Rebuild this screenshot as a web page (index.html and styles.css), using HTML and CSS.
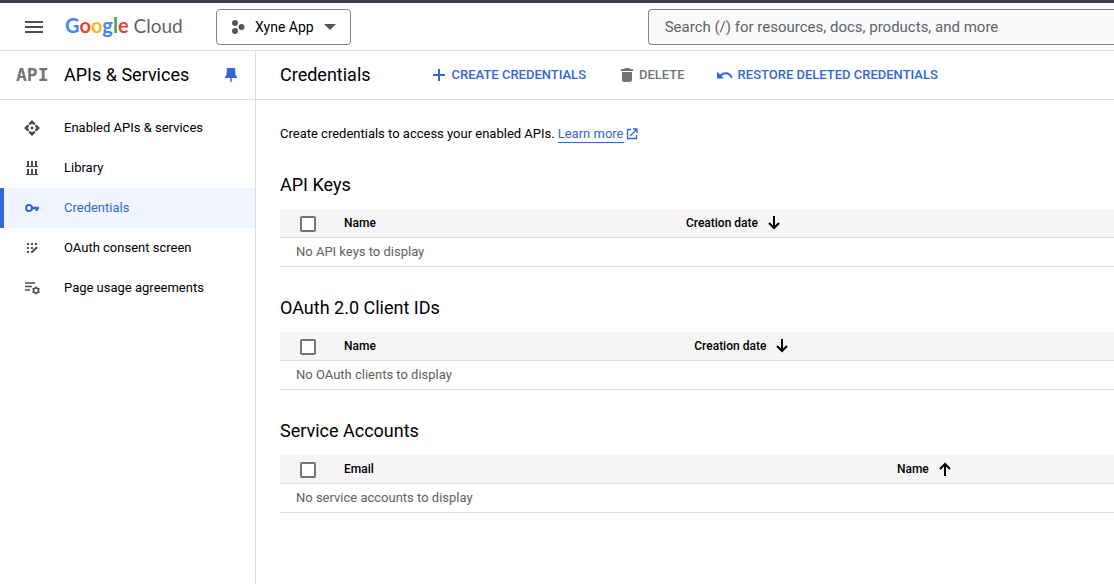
FILE: index.html
```html
<!DOCTYPE html>
<html lang="en">
<head>
<meta charset="utf-8">
<meta name="viewport" content="width=device-width, initial-scale=1">
<title>Credentials – APIs &amp; Services</title>
<link rel="stylesheet" href="styles.css">
</head>
<body>
<header class="topbar">
  <button class="menu-button" type="button" aria-label="Main menu">
    <svg width="18" height="12" viewBox="0 0 18 12" fill="currentColor"><path d="M0 0h18v2H0zM0 5h18v2H0zM0 10h18v2H0z"/></svg>
  </button>
  <a class="brand" href="#" aria-label="Google Cloud"><span class="brand-google"><span class="blue">G</span><span class="red">o</span><span class="yellow">o</span><span class="blue">g</span><span class="green">l</span><span class="red">e</span></span><span class="brand-cloud">Cloud</span></a>
  <button class="project-picker" type="button">
    <svg width="14" height="14" viewBox="0 0 14 14" fill="currentColor"><circle cx="4" cy="3" r="3"/><circle cx="10.500" cy="7" r="3"/><circle cx="4" cy="11" r="3"/></svg>
    <span>Xyne App</span>
    <svg class="caret" width="12" height="6" viewBox="0 0 12 6" fill="currentColor"><path d="M0 0h12L6 6z"/></svg>
  </button>
  <input class="search" type="search" aria-label="Search" placeholder="Search (/) for resources, docs, products, and more">
</header>

<div class="layout">
  <aside class="sidebar">
    <div class="product">
      <span class="product-icon" aria-hidden="true">API</span>
      <h2 class="product-title">APIs &amp; Services</h2>
      <button class="pin" type="button" aria-label="Pin product">
        <svg width="12" height="16" viewBox="0 0 12 16" fill="currentColor"><path d="M2.500 1h7q.5 0 .6.500L10.500 8l1.500 2v1H6.700v4h-1.400v-4H0v-1l1.500-2 .4-6.500Q2 1 2.500 1z"/></svg>
      </button>
    </div>
    <nav class="nav" aria-label="APIs and services">
      <a class="nav-item" href="#">
        <svg width="16" height="16" viewBox="0 0 16 16" fill="currentColor"><path d="M8 0l3.500 3.500-1.500 1.800L8 3.800 6 5.300 4.500 3.500zM16 8l-3.500 3.500-1.800-1.500L12.200 8l-1.500-2 1.800-1.500zM8 16l-3.500-3.500L6 10.700l2 1.500 2-1.500 1.500 1.800zM0 8l3.500-3.500L5.300 6 3.800 8l1.500 2-1.800 1.500z"/><circle cx="8" cy="8" r="1.400"/></svg>
        <span>Enabled APIs &amp; services</span>
      </a>
      <a class="nav-item" href="#">
        <svg width="16" height="16" viewBox="0 0 16 16" fill="currentColor"><path d="M2 6h12v1H2zM3 1h2v5H3zM7 1h2v5H7zM11 1h2v5h-2zM2 14h12v1H2zM3 9h2v5H3zM7 9h2v5H7zM11 9h2v5h-2z"/></svg>
        <span>Library</span>
      </a>
      <a class="nav-item selected" href="#" aria-current="page">
        <svg width="16" height="16" viewBox="0 0 16 16" fill="none" stroke="currentColor"><circle cx="5" cy="8" r="3" stroke-width="2"/><path d="M8 8h7M12.700 8v3" stroke-width="2.400"/></svg>
        <span>Credentials</span>
      </a>
      <a class="nav-item" href="#">
        <svg width="16" height="16" viewBox="0 0 16 16" fill="currentColor"><path d="M3 3h2v2H3zM7 3h2v2H7zM11 3h2v2h-2zM3 7h2v2H3zM7 7h2v2H7zM3 11h2v2H3z"/><path d="M7 13v-1.500L12.300 6.500l1.500 1.300L8.500 13z"/></svg>
        <span>OAuth consent screen</span>
      </a>
      <a class="nav-item" href="#">
        <svg width="16" height="16" viewBox="0 0 16 16" fill="none" stroke="currentColor" stroke-width="1.500"><path d="M1 3h10M1 6.500h7M1 10h5"/><circle cx="12" cy="10.500" r="2.500"/><path d="M12 6.500V8M12 13v1.500M8.500 8.500l1.300.8M14.200 11.700l1.300.8M8.500 12.500l1.300-.8M14.200 9.300l1.300-.8"/></svg>
        <span>Page usage agreements</span>
      </a>
    </nav>
  </aside>

  <main class="main">
    <div class="toolbar">
      <h1 class="page-title">Credentials</h1>
      <button class="action create" type="button">
        <svg width="14" height="14" viewBox="0 0 14 14" fill="currentColor"><path d="M6 1h2v5h5v2H8v5H6V8H1V6h5z"/></svg>
        <span>CREATE CREDENTIALS</span>
      </button>
      <button class="action delete" type="button" disabled>
        <svg width="14" height="16" viewBox="0 0 14 16" fill="currentColor"><path d="M4.500 1h5v1H13v2H1V2h3.500zM2 5h10v8q0 2-2 2H4q-2 0-2-2z"/></svg>
        <span>DELETE</span>
      </button>
      <button class="action restore" type="button">
        <svg width="16" height="14" viewBox="0 0 16 14" fill="currentColor"><path d="M0 3.500v7h7L4.400 7.900Q6.200 6.200 8.500 6.200q4 0 5.400 4.100l1.900-.6Q13.900 4.200 8.500 4.200 5.400 4.200 3 6.500z"/></svg>
        <span>RESTORE DELETED CREDENTIALS</span>
      </button>
    </div>

    <div class="content">
      <p class="intro">Create credentials to access your enabled APIs. <a class="learn-more" href="#">Learn more</a><svg class="external" width="12" height="12" viewBox="0 0 12 12" fill="none" stroke="currentColor" stroke-width="1.300"><path d="M5 1.500H1.500v9h9V7M7 1h4v4M11 1L4 8"/></svg></p>

      <section class="section">
        <h2 class="section-title">API Keys</h2>
        <table class="table">
          <colgroup><col class="col-check"><col class="col-key"><col></colgroup>
          <thead><tr>
            <th><input class="check" type="checkbox" aria-label="Select all API keys"></th>
            <th scope="col">Name</th>
            <th scope="col" aria-sort="descending"><button class="sort" type="button">Creation date<svg width="12" height="14" viewBox="0 0 12 14" fill="none" stroke="currentColor" stroke-width="2"><path d="M6 0v12M1 7l5 5 5-5"/></svg></button></th>
          </tr></thead>
          <tbody><tr><td colspan="3">No API keys to display</td></tr></tbody>
        </table>
      </section>

      <section class="section">
        <h2 class="section-title">OAuth 2.0 Client IDs</h2>
        <table class="table">
          <colgroup><col class="col-check"><col class="col-client"><col></colgroup>
          <thead><tr>
            <th><input class="check" type="checkbox" aria-label="Select all OAuth clients"></th>
            <th scope="col">Name</th>
            <th scope="col" aria-sort="descending"><button class="sort" type="button">Creation date<svg width="12" height="14" viewBox="0 0 12 14" fill="none" stroke="currentColor" stroke-width="2"><path d="M6 0v12M1 7l5 5 5-5"/></svg></button></th>
          </tr></thead>
          <tbody><tr><td colspan="3">No OAuth clients to display</td></tr></tbody>
        </table>
      </section>

      <section class="section">
        <h2 class="section-title">Service Accounts</h2>
        <table class="table">
          <colgroup><col class="col-check"><col class="col-email"><col></colgroup>
          <thead><tr>
            <th><input class="check" type="checkbox" aria-label="Select all service accounts"></th>
            <th scope="col">Email</th>
            <th scope="col" aria-sort="ascending"><button class="sort" type="button">Name<svg width="12" height="14" viewBox="0 0 12 14" fill="none" stroke="currentColor" stroke-width="2"><path d="M6 14V2M1 7l5-5 5 5"/></svg></button></th>
          </tr></thead>
          <tbody><tr><td colspan="3">No service accounts to display</td></tr></tbody>
        </table>
      </section>
    </div>
  </main>
</div>
</body>
</html>
```
FILE: styles.css
```css
* { box-sizing: border-box; }

body {
  margin: 0;
  min-height: 100vh;
  display: flex;
  flex-direction: column;
  border-top: 3px solid #41384a;
  background: #fff;
  color: #000;
  font: 13px/20px Roboto, "Liberation Sans", sans-serif;
}

h1, h2, p { margin: 0; }
svg { display: block; flex: none; }
a { color: inherit; text-decoration: none; }

button {
  display: flex;
  align-items: center;
  padding: 0;
  border: 0;
  background: none;
  color: inherit;
  font: inherit;
  white-space: nowrap;
}

.topbar {
  display: flex;
  align-items: center;
  height: 48px;
  padding-left: 25px;
  border-bottom: 1px solid #dadce0;
}

.menu-button { color: #4d4d4d; }

.brand {
  display: flex;
  align-items: baseline;
  gap: 5px;
  width: 117px;
  margin: 0 34px 0 22px;
  padding-bottom: 2px;
  font: 20px/24px Lato, sans-serif;
  white-space: nowrap;
}
.brand-google { font-weight: 700; }
.brand-cloud { color: #5f6368; font-size: 19px; }
.blue { color: #4285f4; }
.red { color: #ea4335; }
.yellow { color: #fbbc04; }
.green { color: #34a853; }

.project-picker {
  flex: none;
  height: 36px;
  padding: 0 14px;
  border: 1px solid #80868b;
  border-radius: 4px;
  font-size: 14px;
}
.project-picker svg { color: #555; }
.project-picker span { margin: 0 10px; }

.search {
  flex: 1;
  min-width: 0;
  height: 36px;
  margin-left: 297px;
  padding: 0 16px;
  border: 1px solid #80868b;
  border-right: 0;
  border-radius: 4px 0 0 4px;
  background: #fafafa;
  font: 15px/20px Roboto, sans-serif;
}
.search::placeholder { color: #5f6368; opacity: 1; }

.layout { flex: 1; display: flex; }

.sidebar {
  flex: none;
  width: 256px;
  border-right: 1px solid #dadce0;
}

.product {
  display: flex;
  align-items: center;
  height: 49px;
  padding: 0 18px 0 16px;
  border-bottom: 1px solid #dadce0;
}
.product-icon {
  width: 48px;
  color: #757575;
  font: 700 18px/20px "DejaVu Sans Mono", monospace;
}
.product-title, .page-title, .section-title {
  font-size: 18px;
  line-height: 24px;
  font-weight: 400;
}
.pin { margin-left: auto; color: #3367d6; }

.nav { padding-top: 8px; }
.nav-item {
  display: flex;
  align-items: center;
  gap: 24px;
  height: 40px;
  padding-left: 20px;
  border-left: 4px solid transparent;
}
.nav-item svg { color: #4d4d4d; }
.selected { border-left-color: #3367d6; background: #f0f5ff; color: #3367d6; }
.nav-item.selected svg { color: inherit; }

.main { flex: 1; min-width: 0; }

.toolbar {
  display: flex;
  align-items: center;
  height: 49px;
  padding-left: 24px;
  border-bottom: 1px solid #dadce0;
}
.action { gap: 6px; color: #3367d6; font-weight: 500; }
.create { margin-left: 61px; }
.delete { margin-left: 34px; color: #757575; gap: 5px; }
.restore { margin-left: 32px; gap: 5px; }

.content { padding: 24px 0 24px 24px; }
.intro { display: flex; align-items: center; }
.learn-more {
  margin: 0 2px 0 3px;
  border-bottom: 1px solid #3367d6;
  color: #3367d6;
  line-height: 16px;
}
.external { color: #3367d6; }

.section { margin-top: 29px; }
.section-title { margin-bottom: 12px; }

.table { width: 100%; border-collapse: separate; border-spacing: 0; table-layout: fixed; }
.col-check { width: 48px; }
.col-key { width: 41%; }
.col-client { width: 42%; }
.col-email { width: 66.3%; }

.table th, .table td {
  height: 29px;
  padding: 0 16px;
  border-bottom: 1px solid #dadce0;
  text-align: left;
  vertical-align: middle;
}
.table th { background: #f5f5f5; font-size: 12px; font-weight: 500; }
.table th:first-child { padding: 2px 0 0 20px; }
.table td { color: #616161; }

.check {
  appearance: none;
  display: block;
  width: 16px;
  height: 16px;
  margin: 0;
  border: 2px solid #757575;
  border-radius: 2px;
  background: #fff;
}
.sort { gap: 10px; }
```
